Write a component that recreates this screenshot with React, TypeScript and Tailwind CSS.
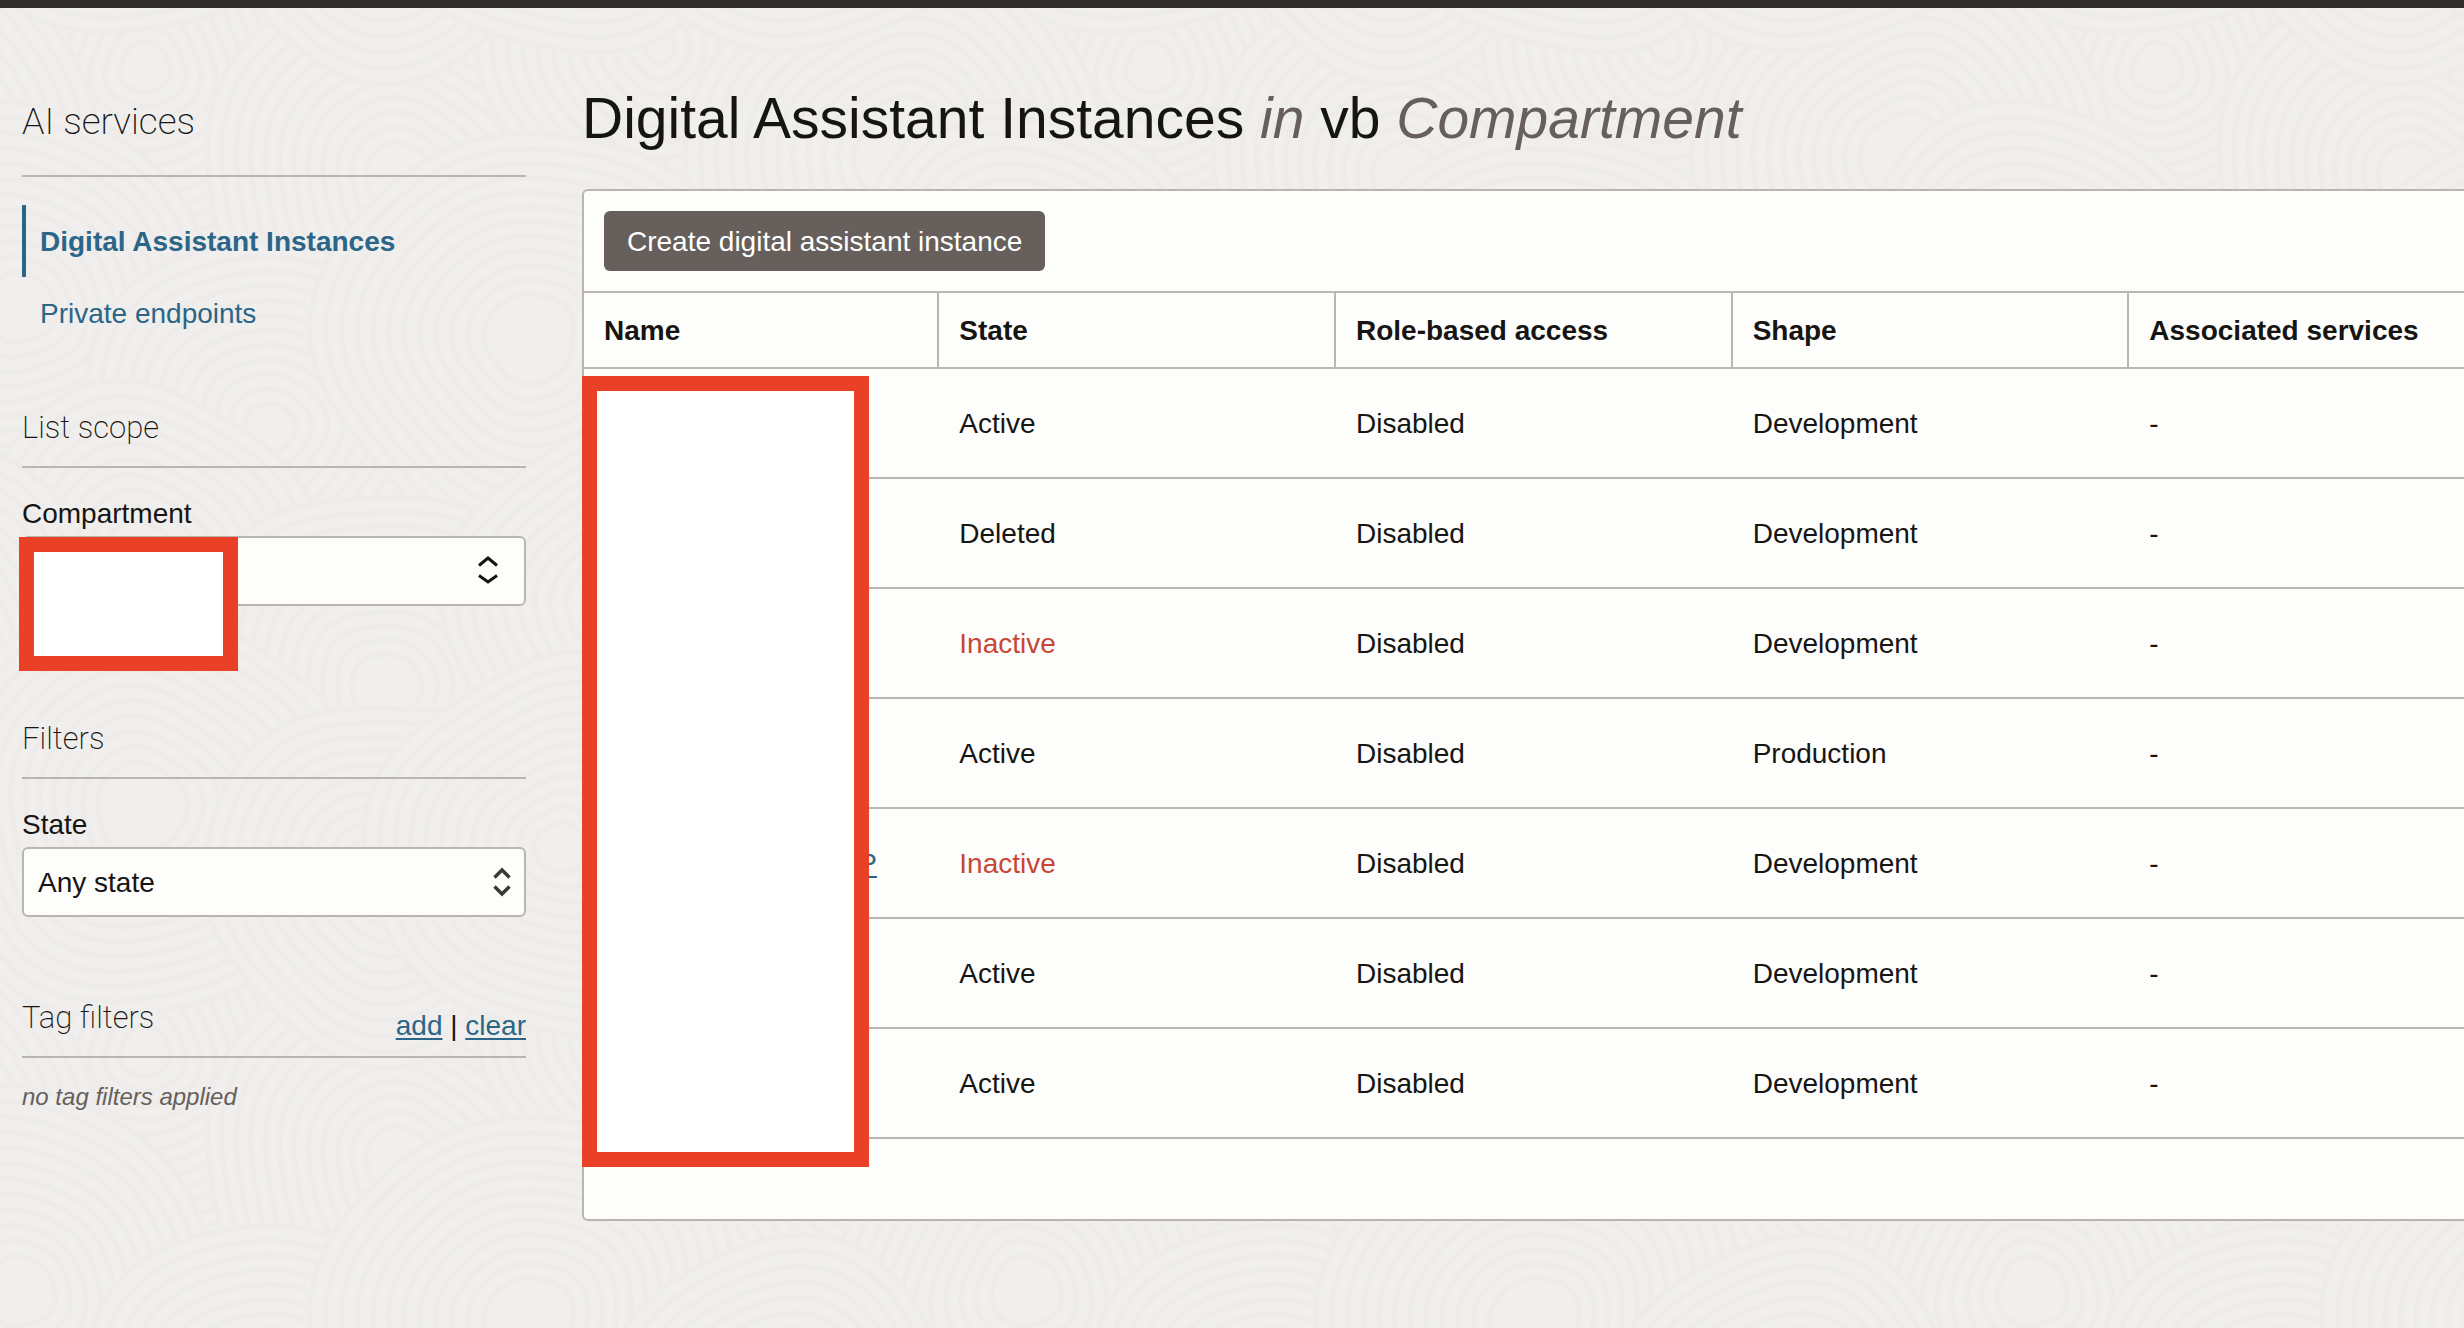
type Row = { name: string; state: string; access: string; shape: string; services: string };

const rows: Row[] = [
  { name: "", state: "Active", access: "Disabled", shape: "Development", services: "-" },
  { name: "", state: "Deleted", access: "Disabled", shape: "Development", services: "-" },
  { name: "", state: "Inactive", access: "Disabled", shape: "Development", services: "-" },
  { name: "", state: "Active", access: "Disabled", shape: "Production", services: "-" },
  { name: "P", state: "Inactive", access: "Disabled", shape: "Development", services: "-" },
  { name: "", state: "Active", access: "Disabled", shape: "Development", services: "-" },
  { name: "", state: "Active", access: "Disabled", shape: "Development", services: "-" },
];

const columns = [
  { label: "Name", width: "w-[18.9%]" },
  { label: "State", width: "w-[21.1%]" },
  { label: "Role-based access", width: "w-[21.1%]" },
  { label: "Shape", width: "w-[21.1%]" },
  { label: "Associated services", width: "" },
];

/* Wood-grain backdrop: overlapping groups of wobbly rings in a repeating tile. */
const TILE_W = 1006;
const TILE_H = 984;
const knots = [
  [145, 60, 190], [400, 170, 200], [660, 40, 180], [900, 150, 210],
  [20, 300, 200], [270, 420, 190], [530, 330, 210], [780, 440, 190],
  [141, 560, 180], [386, 680, 200], [640, 600, 190], [930, 640, 200],
  [141, 800, 210], [386, 870, 180], [560, 840, 190], [800, 830, 200],
];

function ring(cx: number, cy: number, r: number, phase: number) {
  const points: string[] = [];
  for (let i = 0; i < 48; i++) {
    const a = (i / 48) * Math.PI * 2;
    const rr = r * (1 + 0.04 * Math.sin(3 * a + phase) + 0.02 * Math.sin(5 * a - phase * 2));
    points.push(`${(cx + rr * Math.cos(a)).toFixed(1)} ${(cy + rr * Math.sin(a)).toFixed(1)}`);
  }
  return `M${points.join("L")}Z`;
}

function Backdrop() {
  const copies = knots.flatMap(([x, y, r], k) =>
    [-TILE_H, 0, TILE_H].flatMap((dy) =>
      [-TILE_W, 0, TILE_W]
        .map((dx) => ({ x: x + dx, y: y + dy, r, k }))
        .filter((c) => c.x + 240 > 0 && c.x - 240 < TILE_W && c.y + 240 > 0 && c.y - 240 < TILE_H),
    ),
  );
  return (
    <svg className="absolute inset-0 -z-10 h-full w-full" aria-hidden="true">
      <defs>
        <pattern id="grain" width={TILE_W} height={TILE_H} patternUnits="userSpaceOnUse">
          {copies.map((c, i) => (
            <g key={i} stroke="#edecea" strokeWidth="5" fill="#f0efed">
              {Array.from({ length: 12 }, (_, n) => (
                <path key={n} d={ring(c.x, c.y, c.r - n * 15, c.k * 1.7)} />
              ))}
            </g>
          ))}
        </pattern>
      </defs>
      <rect width="100%" height="100%" fill="url(#grain)" />
    </svg>
  );
}

const sectionTitle = "font-[Roboto,sans-serif] text-[31px] leading-10 font-extralight";
const link = "text-[#2b6688] underline decoration-2 underline-offset-3";

function Sidebar() {
  return (
    <aside className="w-[504px] shrink-0 pt-[90px]">
      <h2 className="border-b-2 border-[#bab5b0] pb-[29px] font-[Roboto,sans-serif] text-[37px] leading-[48px] font-extralight">
        AI services
      </h2>
      <nav className="mt-7 text-[#2b6688]">
        <a
          href="#instances"
          aria-current="page"
          className="flex h-[72px] items-center border-l-4 border-[#2b6688] pt-0.5 pl-3.5 font-bold"
        >
          Digital Assistant Instances
        </a>
        <a href="#endpoints" className="flex h-[72px] items-center border-l-4 border-transparent pt-0.5 pl-3.5">
          Private endpoints
        </a>
      </nav>

      <section className="mt-[59px]">
        <h3 className={`${sectionTitle} border-b-2 border-[#bab5b0] pb-[18px]`}>List scope</h3>
        <label htmlFor="compartment" className="mt-7 block leading-9">
          Compartment
        </label>
        <div className="relative mt-1">
          <button
            id="compartment"
            type="button"
            className="flex h-[70px] w-full items-center justify-end rounded-md border-2 border-[#bab5b0] bg-[#fdfdfb] pr-[26px]"
          >
            <svg width="20" height="32" viewBox="0 0 20 32" fill="none" stroke="#161513" strokeWidth="3" aria-hidden="true">
              <path d="M1 10.5 10 3 19 10.5M1 20.5 10 27 19 20.5" />
            </svg>
          </button>
          <div className="absolute top-px -left-[3px] h-[134px] w-[219px] border-[15px] border-[#ea4126] bg-white" />
        </div>
      </section>

      <section className="mt-[113px]">
        <h3 className={`${sectionTitle} border-b-2 border-[#bab5b0] pb-[18px]`}>Filters</h3>
        <label htmlFor="state" className="mt-7 block leading-9">
          State
        </label>
        <div className="relative mt-1">
          <select
            id="state"
            className="block h-[70px] w-full appearance-none rounded-md border-2 border-[#bab5b0] bg-[#fdfdfb] pt-0.5 pr-12 pl-3.5"
          >
            <option>Any state</option>
          </select>
          <svg
            className="pointer-events-none absolute inset-y-0 right-3.5 my-auto"
            width="20"
            height="32"
            viewBox="0 0 20 32"
            fill="none"
            stroke="#3a3836"
            strokeWidth="3.4"
            aria-hidden="true"
          >
            <path d="M2.5 11.5 10 4 17.5 11.5M2.5 20.5 10 28 17.5 20.5" />
          </svg>
        </div>
      </section>

      <section className="mt-[81px]">
        <div className="flex items-end justify-between border-b-2 border-[#bab5b0] pb-3">
          <h3 className={`${sectionTitle} mb-1.5`}>Tag filters</h3>
          <div className="leading-9">
            <a href="#add" className={link}>
              add
            </a>{" "}
            |{" "}
            <a href="#clear" className={link}>
              clear
            </a>
          </div>
        </div>
        <p className="mt-[23px] text-2xl leading-8 text-[#665f5b] italic">no tag filters applied</p>
      </section>
    </aside>
  );
}

function Instances() {
  return (
    <main className="min-w-0 flex-1 pt-[78px]">
      <h1 className="mb-[39px] text-[57px] leading-[64px] whitespace-nowrap">
        Digital Assistant Instances <i className="text-[#665f5b]">in</i> vb <i className="text-[#665f5b]">Compartment</i>
      </h1>
      <div className="relative">
        <div className="rounded-l-md border-2 border-r-0 border-[#bab5b0] bg-[#fdfdfb] pb-20">
          <div className="border-b-2 border-[#bab5b0] p-5">
            <button type="button" className="block h-[60px] rounded-md bg-[#665f5b] px-[23px] pt-0.5 text-white">
              Create digital assistant instance
            </button>
          </div>
          <table className="w-full table-fixed border-separate border-spacing-0 text-left">
            <thead>
              <tr>
                {columns.map((c) => (
                  <th
                    key={c.label}
                    scope="col"
                    className={`${c.width} h-[76px] border-r-2 border-b-2 border-[#bab5b0] px-5 pt-0.5 whitespace-nowrap last:border-r-0`}
                  >
                    {c.label}
                  </th>
                ))}
              </tr>
            </thead>
            <tbody>
              {rows.map((row, i) => (
                <tr
                  key={i}
                  className="[&>td]:h-[110px] [&>td]:border-b-2 [&>td]:border-[#bab5b0] [&>td]:px-5 [&>td]:pt-0.5"
                >
                  <td>
                    {row.name && (
                      <div className="w-[273px] text-right">
                        <a href="#instance" className={link}>
                          {row.name}
                        </a>
                      </div>
                    )}
                  </td>
                  <td className={row.state === "Inactive" ? "text-[#c74634]" : ""}>{row.state}</td>
                  <td>{row.access}</td>
                  <td>{row.shape}</td>
                  <td>{row.services}</td>
                </tr>
              ))}
            </tbody>
          </table>
        </div>
        <div className="absolute top-[187px] left-0 h-[791px] w-[287px] border-[15px] border-[#ea4126] bg-white" />
      </div>
    </main>
  );
}

export default function App() {
  return (
    <div className="relative isolate min-h-screen overflow-hidden border-t-8 border-[#312d2a] bg-[#f0efed] font-['Liberation_Sans',Arial,sans-serif] text-[28px] leading-9 text-[#161513]">
      <Backdrop />
      <div className="flex gap-14 pl-[22px]">
        <Sidebar />
        <Instances />
      </div>
    </div>
  );
}
